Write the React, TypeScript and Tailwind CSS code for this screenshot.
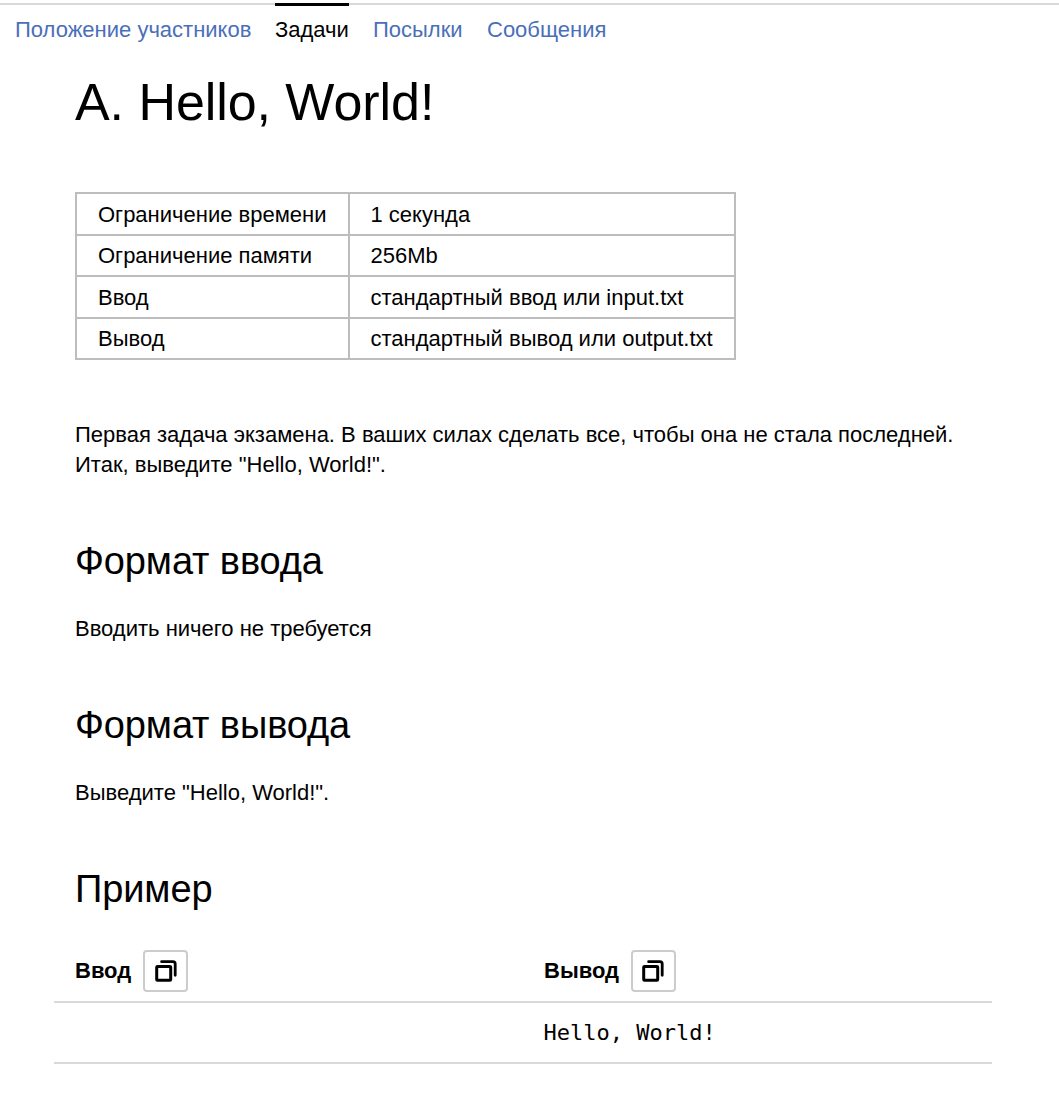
import React from "react";

const tabs = [
  { label: "Положение участников", width: "w-[236px]" },
  { label: "Задачи", width: "w-[74px]", active: true },
  { label: "Посылки", width: "w-[90px]" },
  { label: "Сообщения", width: "w-[119px]" },
];

const limits = [
  ["Ограничение времени", "1 секунда"],
  ["Ограничение памяти", "256Mb"],
  ["Ввод", "стандартный ввод или input.txt"],
  ["Вывод", "стандартный вывод или output.txt"],
];

function CopyButton({ iconClass = "" }: { iconClass?: string }) {
  return (
    <button className="flex h-[42px] w-[45px] items-center justify-center rounded-[4px] border-2 border-[#cccccc] bg-white">
      <svg className={iconClass} width="23" height="22" viewBox="0 0 23 22" fill="none" stroke="#000" strokeLinecap="round" strokeLinejoin="round">
        <rect x="2.7" y="6.5" width="14" height="13.8" rx="0.8" strokeWidth="3" />
        <path d="M7.6 1.7H19Q21.2 1.7 21.2 3.9V15.3" strokeWidth="2.8" />
      </svg>
    </button>
  );
}

function Section({ title, text }: { title: string; text: string }) {
  return (
    <section className="h-[164px]">
      <h2 className="text-[38px] leading-[46px] tracking-[-0.1px]">{title}</h2>
      <p className="mt-[30px] text-[22px] leading-[30px]">{text}</p>
    </section>
  );
}

export default function App() {
  return (
    <div className="h-[1093px] overflow-hidden bg-white pt-[3px] font-['Liberation_Sans',Arial,sans-serif] text-[22px] text-black">
      <nav className="flex h-[50px] gap-6 border-t-2 border-[#d9d9d9] pl-[15px]">
        {tabs.map(({ label, width, active }) => (
          <a
            key={label}
            className={`${width} -mt-0.5 h-[43px] whitespace-nowrap border-t-[3px] pt-[7px] leading-[33px] ${
              active ? "border-black" : "border-transparent text-[#4a6fb9]"
            }`}
          >
            {label}
          </a>
        ))}
      </nav>
      <main className="pl-[75px]">
        <h1 className="h-[139px] pt-[19px] text-[52px] leading-[60px] tracking-[-0.06px]">A. Hello, World!</h1>
        <div className="h-[168px] w-[661px] border-2 border-b-0 border-[#bdbdbd]">
          {limits.map(([name, value], i) => (
            <div
              key={name}
              className={`flex border-b-2 border-[#bdbdbd] ${i % 2 === 0 ? "h-[42px] leading-[42px]" : "h-[41px] leading-[40px]"}`}
            >
              <div className="h-full w-[273px] border-r-2 border-[#bdbdbd] pl-[21px]">{name}</div>
              <div className="pl-[20.5px]">{value}</div>
            </div>
          ))}
        </div>
        <div className="mb-[58px] mt-[60px] leading-[30px]">
          <p>Первая задача экзамена. В ваших силах сделать все, чтобы она не стала последней.</p>
          <p>Итак, выведите "Hello, World!".</p>
        </div>
        <Section title="Формат ввода" text="Вводить ничего не требуется" />
        <Section title="Формат вывода" text={'Выведите "Hello, World!".'} />
        <h2 className="text-[38px] leading-[46px] tracking-[-0.1px]">Пример</h2>
      </main>
      <div className="ml-[54px] mt-[38px] w-[938px]">
        <div className="flex h-[53px] border-b-2 border-[#d9d9d9] font-bold">
          <div className="flex h-[42px] w-[490px] items-center gap-3 pl-[21px]">
            <span className="pb-0.5">Ввод</span>
            <CopyButton />
          </div>
          <div className="flex h-[42px] items-center gap-3">
            <span className="pb-0.5">Вывод</span>
            <CopyButton iconClass="mr-0.5" />
          </div>
        </div>
        <div className="h-[61px] border-b-2 border-[#d9d9d9] pl-[489.5px] font-['DejaVu_Sans_Mono',monospace] leading-[60px]">Hello, World!</div>
      </div>
    </div>
  );
}
